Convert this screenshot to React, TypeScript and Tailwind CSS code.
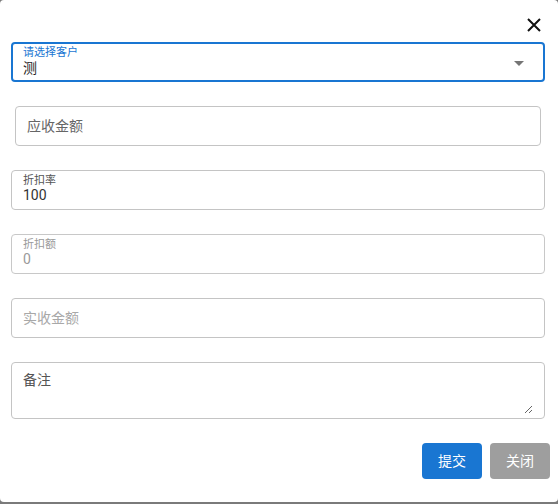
import React from "react";

const font = { fontFamily: 'Roboto, "Noto Sans CJK SC", sans-serif' };

export default function App() {
  return (
    <div className="w-[558px] h-[504px] bg-[#7a7a7a]" style={font}>
      <div className="w-[558px] h-[502px] bg-white rounded-[4px] flex flex-col">
        <div className="h-[42px] flex justify-end items-start pr-[17px] pt-[18px]">
          <svg width="14" height="14" viewBox="0 0 14 14" className="block">
            <path d="M1 1 L13 13 M13 1 L1 13" stroke="#111" strokeWidth="2" fill="none" />
          </svg>
        </div>
        <div className="flex flex-col gap-6 pl-[11px] w-[545px]">
          <div className="h-10 border-2 border-[#1976d2] rounded-[4px] relative pl-[10px] pt-[3px]">
            <div className="text-[11px] leading-[12px] text-[#1976d2]">请选择客户</div>
            <div className="text-[14px] leading-[16px] text-[#222] mt-[1px]">测</div>
            <svg width="10" height="5" viewBox="0 0 10 5" className="absolute right-[19px] top-[17px]">
              <path d="M0 0 L10 0 L5 5 Z" fill="#757575" />
            </svg>
          </div>
          <div className="h-10 mx-1 border border-[#c4c4c4] rounded-[4px] flex items-center pl-[11px]">
            <span className="text-[14px] text-[#666]">应收金额</span>
          </div>
          <div className="h-10 border border-[#c4c4c4] rounded-[4px] pl-[11px] pt-[4px]">
            <div className="text-[11px] leading-[12px] text-[#555]">折扣率</div>
            <div className="text-[14px] leading-[17px] text-[#333]">100</div>
          </div>
          <div className="h-10 border border-[#c8c8c8] rounded-[4px] pl-[11px] pt-[4px]">
            <div className="text-[11px] leading-[12px] text-[#9a9a9a]">折扣额</div>
            <div className="text-[14px] leading-[17px] text-[#9a9a9a]">0</div>
          </div>
          <div className="h-10 border border-[#c4c4c4] rounded-[4px] flex items-center pl-[11px]">
            <span className="text-[14px] text-[#a8a8a8]">实收金额</span>
          </div>
          <div className="h-[57px] border border-[#c4c4c4] rounded-[4px] pl-[11px] pr-[11px] pt-[7px] pb-[4px] flex">
            <textarea
              placeholder="备注"
              className="flex-1 h-full text-[14px] leading-[20px] outline-none placeholder:text-[#555] resize-y"
              style={font}
            />
          </div>
        </div>
        <div className="flex justify-end gap-2 pr-[8px] mt-6">
          <button className="w-[60px] h-[36px] bg-[#1976d2] text-white text-[14px] rounded-[4px]">提交</button>
          <button className="w-[60px] h-[36px] bg-[#9e9e9e] text-white text-[14px] rounded-[4px]">关闭</button>
        </div>
      </div>
    </div>
  );
}
